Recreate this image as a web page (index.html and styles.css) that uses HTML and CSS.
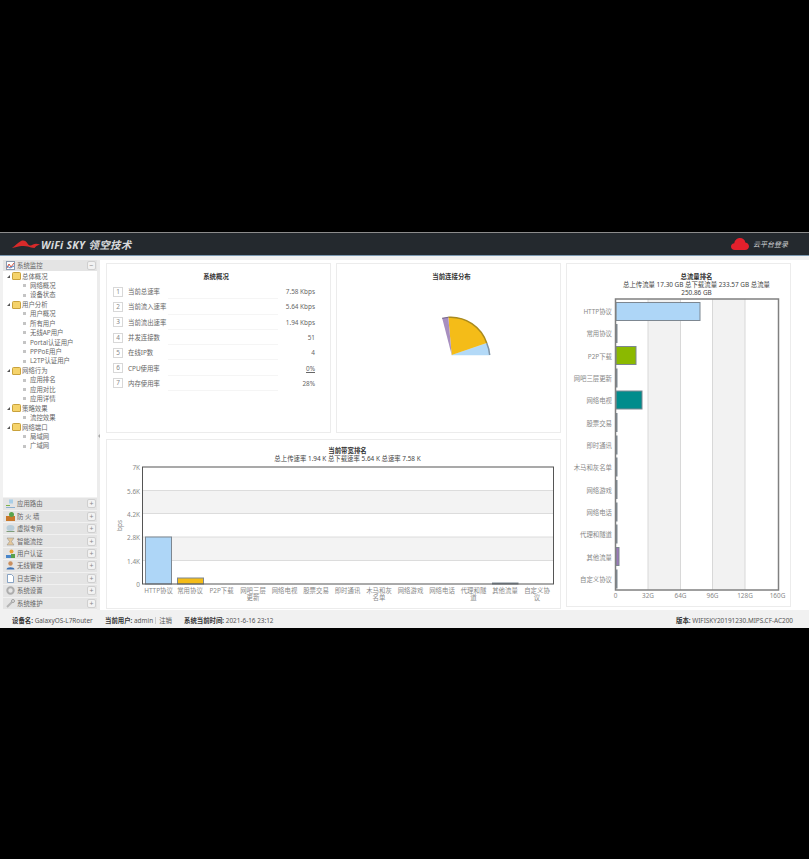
FILE: index.html
```html
<!DOCTYPE html>
<html lang="zh-CN">
<head>
    <meta charset="UTF-8">
    <meta name="viewport" content="width=device-width, initial-scale=1.0">
    <title>WiFiSKY 领空技术</title>
    <link rel="stylesheet" href="styles.css">
</head>
<body>

<div class="app">
    <div class="topbar">
        <div class="logo">
            <svg class="logo-bat" width="28" height="9" viewBox="0 0 28 9"><path d="M0 8 C3 6 6 2.500 9 1 C12 0 14 1 15.500 3.500 C17 6 19 6 21 4.500 C23 3.500 25 3.500 28 4.500 C25 5.500 23.500 6.500 22.500 8 C20 7.500 18 7.500 16 6.500 C13 5.500 8 5.500 0 8Z" fill="#d82a2a"/></svg>
            <span class="logo-text">WiFi SKY 领空技术</span>
        </div>
        <div class="cloud-login">
            <svg width="18" height="12" viewBox="0 0 18 12"><path d="M4 12 C1.500 12 0 10.500 0 8.500 C0 6.500 1.500 5.200 3.300 5.200 C3.800 2.200 6 0 9 0 C11.800 0 13.800 1.800 14.400 4.400 C16.500 4.800 18 6.300 18 8.300 C18 10.500 16.300 12 14 12Z" fill="#e3202c"/></svg>
            <span>云平台登录</span>
        </div>
    </div>

    <div class="main">
        <div class="sidebar">
            <div class="side-head">
                <svg class="side-icon" width="9" height="9" viewBox="0 0 9 9"><rect x="0.500" y="0.500" width="8" height="8" fill="#fff" stroke="#8a9ab0"/><path d="M1 7 L3 3 L5 6 L8 2" fill="none" stroke="#d2553f"/><path d="M1 5 L4 7 L8 5" fill="none" stroke="#4a7fc9"/></svg>
                <span>系统监控</span>
                <span class="toggle">−</span>
            </div>
            <div class="tree">
                <div class="tree-group"><i class="arrow"></i><i class="folder"></i>总体概况</div>
                <div class="tree-item"><i class="leaf"></i>网络概况</div>
                <div class="tree-item"><i class="leaf"></i>设备状态</div>
                <div class="tree-group"><i class="arrow"></i><i class="folder"></i>用户分析</div>
                <div class="tree-item"><i class="leaf"></i>用户概况</div>
                <div class="tree-item"><i class="leaf"></i>所有用户</div>
                <div class="tree-item"><i class="leaf"></i>无线AP用户</div>
                <div class="tree-item"><i class="leaf"></i>Portal认证用户</div>
                <div class="tree-item"><i class="leaf"></i>PPPoE用户</div>
                <div class="tree-item"><i class="leaf"></i>L2TP认证用户</div>
                <div class="tree-group"><i class="arrow"></i><i class="folder"></i>网络行为</div>
                <div class="tree-item"><i class="leaf"></i>应用排名</div>
                <div class="tree-item"><i class="leaf"></i>应用对比</div>
                <div class="tree-item"><i class="leaf"></i>应用详情</div>
                <div class="tree-group"><i class="arrow"></i><i class="folder"></i>策略效果</div>
                <div class="tree-item"><i class="leaf"></i>流控效果</div>
                <div class="tree-group"><i class="arrow"></i><i class="folder"></i>网络端口</div>
                <div class="tree-item"><i class="leaf"></i>局域网</div>
                <div class="tree-item"><i class="leaf"></i>广域网</div>
            </div>
            <div class="accordion">
                <div class="acc-row"><svg class="acc-icon" width="9" height="9" viewBox="0 0 9 9"><path d="M3 0.500h4v4h-4z" fill="#a9cfe8"/><path d="M0 6h4v1h-4z" fill="#7fb24a"/><path d="M0 8h9v1h-9z" fill="#8cb0d0"/></svg><span>应用路由</span><span class="toggle">+</span></div>
                <div class="acc-row"><svg class="acc-icon" width="9" height="9" viewBox="0 0 9 9"><path d="M0 4h9v5h-9z" fill="#c9772b"/><circle cx="5.500" cy="2.500" r="2.500" fill="#58a24c"/></svg><span>防 火 墙</span><span class="toggle">+</span></div>
                <div class="acc-row"><svg class="acc-icon" width="9" height="9" viewBox="0 0 9 9"><ellipse cx="4.500" cy="4" rx="4" ry="3" fill="#b9cdd9"/><path d="M0.500 7h8v1h-8z" fill="#7f9d7a"/></svg><span>虚拟专网</span><span class="toggle">+</span></div>
                <div class="acc-row"><svg class="acc-icon" width="9" height="9" viewBox="0 0 9 9"><path d="M1 1h7L5.500 4.500 8 8H1l2.500-3.500z" fill="#e3c79c" stroke="#8d8d8d" stroke-width="0.500"/></svg><span>智能流控</span><span class="toggle">+</span></div>
                <div class="acc-row"><svg class="acc-icon" width="9" height="9" viewBox="0 0 9 9"><circle cx="5.500" cy="2.500" r="2" fill="#e9a23b"/><path d="M0 6h5v3h-5z" fill="#4a86c9"/><path d="M5 5h4v4h-4z" fill="#5aa04c"/></svg><span>用户认证</span><span class="toggle">+</span></div>
                <div class="acc-row"><svg class="acc-icon" width="9" height="9" viewBox="0 0 9 9"><circle cx="4.500" cy="2.500" r="2.200" fill="#c98f5f"/><path d="M0.500 8.500C0.500 5.500 8.500 5.500 8.500 8.500z" fill="#3d72b5"/></svg><span>无线管理</span><span class="toggle">+</span></div>
                <div class="acc-row"><svg class="acc-icon" width="9" height="9" viewBox="0 0 9 9"><path d="M1.500 0.500h4l2 2v6h-6z" fill="#fff" stroke="#6d8fb8" stroke-width="0.800"/></svg><span>日志审计</span><span class="toggle">+</span></div>
                <div class="acc-row"><svg class="acc-icon" width="9" height="9" viewBox="0 0 9 9"><circle cx="4.500" cy="4.500" r="3.200" fill="none" stroke="#adadad" stroke-width="2"/></svg><span>系统设置</span><span class="toggle">+</span></div>
                <div class="acc-row"><svg class="acc-icon" width="9" height="9" viewBox="0 0 9 9"><path d="M1 8 L6 3" stroke="#b5b5b5" stroke-width="2"/><circle cx="7" cy="2" r="1.500" fill="none" stroke="#a0a0a0"/></svg><span>系统维护</span><span class="toggle">+</span></div>
            </div>
        </div>

        <div class="splitter"><span class="splitter-arrow"></span></div>

        <div class="content">
            <div class="card card-stats">
                <h3 class="card-title">系统概况</h3>
                <div class="stat-list">
                    <div class="stat-row"><span class="stat-num">1</span><span class="stat-name">当前总速率</span><span class="stat-value">7.58 Kbps</span></div>
                    <div class="stat-row"><span class="stat-num">2</span><span class="stat-name">当前流入速率</span><span class="stat-value">5.64 Kbps</span></div>
                    <div class="stat-row"><span class="stat-num">3</span><span class="stat-name">当前流出速率</span><span class="stat-value">1.94 Kbps</span></div>
                    <div class="stat-row"><span class="stat-num">4</span><span class="stat-name">并发连接数</span><span class="stat-value">51</span></div>
                    <div class="stat-row"><span class="stat-num">5</span><span class="stat-name">在线IP数</span><span class="stat-value">4</span></div>
                    <div class="stat-row"><span class="stat-num">6</span><span class="stat-name">CPU使用率</span><span class="stat-value stat-link">0%</span></div>
                    <div class="stat-row"><span class="stat-num">7</span><span class="stat-name">内存使用率</span><span class="stat-value">28%</span></div>
                </div>
            </div>

            <div class="card card-pie">
                <h3 class="card-title">当前连接分布</h3>
                <!-- pie, centre is at 451.7,355 on the page -->
                <svg class="pie" width="223" height="150" viewBox="0 0 223 150">
                    <g transform="translate(114.700 53)">
                        <path d="M0 21 L38 21 A38 38 0 0 0 35 9 Z" fill="#b3d9f7" stroke="#b3d9f7" stroke-width="0.500"/>
                        <path d="M38 21 A38 38 0 0 0 35 9" fill="none" stroke="#7f93a5" stroke-width="1.500"/>
                        <path d="M0 21 L35 9 A38 38 0 0 0 -3.400 -16.700 Z" fill="#f4bc18"/>
                        <path d="M35 9 A38 38 0 0 0 -3.400 -16.700" fill="none" stroke="#a98a1e" stroke-width="1.500"/>
                        <path d="M0 21 L-3.400 -16.700 A38 38 0 0 0 -9.500 -15.700 Z" fill="#a78fc0"/>
                        <path d="M-3.400 -16.700 A38 38 0 0 0 -9.500 -15.700" fill="none" stroke="#7b6a8e" stroke-width="1.200"/>
                    </g>
                </svg>
            </div>

            <div class="card card-tall">
                <h3 class="card-title">总流量排名</h3>
                <p class="card-sub">总上传流量 17.30 GB 总下载流量 233.57 GB 总流量<br>250.86 GB</p>
                <svg class="chart" width="223" height="310" viewBox="567 296 223 310">
                    <rect x="648" y="299" width="32.500" height="291" fill="#f2f2f2"/>
                    <rect x="712" y="299" width="33" height="291" fill="#f2f2f2"/>
                    <g stroke="#d8d8d8" stroke-width="1">
                        <path d="M648 299V590M680.500 299V590M712.500 299V590M745 299V590"/>
                    </g>
                    <g class="bar-h">
                        <rect x="616" y="302.500" width="84" height="18" fill="#aed6f7"/>
                        <rect x="616" y="324.500" width="1" height="18" fill="#f4bc18"/>
                        <rect x="616" y="346.500" width="20" height="18" fill="#8bb900"/>
                        <rect x="616" y="369" width="1" height="18" fill="#666"/>
                        <rect x="616" y="391" width="26" height="18" fill="#008c8c"/>
                        <rect x="616" y="413.500" width="1" height="18" fill="#666"/>
                        <rect x="616" y="436" width="1" height="18" fill="#666"/>
                        <rect x="616" y="458" width="1" height="18" fill="#666"/>
                        <rect x="616" y="480.500" width="1" height="18" fill="#666"/>
                        <rect x="616" y="503" width="1" height="18" fill="#666"/>
                        <rect x="616" y="525" width="1" height="18" fill="#666"/>
                        <rect x="616" y="547.500" width="3" height="18" fill="#9a78b8"/>
                        <rect x="616" y="570" width="1" height="18" fill="#666"/>
                    </g>
                    <rect x="615.500" y="299" width="163" height="291" fill="none" stroke="#808080" stroke-width="1.500"/>
                    <g class="axis-text" text-anchor="end">
                        <text x="612" y="313.500">HTTP协议</text>
                        <text x="612" y="336">常用协议</text>
                        <text x="612" y="358.500">P2P下载</text>
                        <text x="612" y="380.500">网吧三层更新</text>
                        <text x="612" y="403">网络电视</text>
                        <text x="612" y="425.500">股票交易</text>
                        <text x="612" y="447.500">即时通讯</text>
                        <text x="612" y="470">木马和灰名单</text>
                        <text x="612" y="492.500">网络游戏</text>
                        <text x="612" y="515">网络电话</text>
                        <text x="612" y="537">代理和隧道</text>
                        <text x="612" y="559.500">其他流量</text>
                        <text x="612" y="581.500">自定义协议</text>
                    </g>
                    <g class="axis-text" text-anchor="middle">
                        <text x="615.500" y="598">0</text>
                        <text x="648" y="598">32G</text>
                        <text x="680.500" y="598">64G</text>
                        <text x="712.500" y="598">96G</text>
                        <text x="745" y="598">128G</text>
                        <text x="777.500" y="598">160G</text>
                    </g>
                </svg>
            </div>

            <div class="card card-wide">
                <h3 class="card-title">当前带宽排名</h3>
                <p class="card-sub">总上传速率 1.94 K 总下载速率 5.64 K 总速率 7.58 K</p>
                <svg class="chart" width="453" height="146" viewBox="107 462.500 453 146">
                    <rect x="142" y="490" width="411" height="23" fill="#f3f3f3"/>
                    <rect x="142" y="536.500" width="411" height="23.500" fill="#f3f3f3"/>
                    <path d="M142 490H553M142 513H553M142 536.500H553M142 560H553" stroke="#dcdcdc" stroke-width="1"/>
                    <g class="bar-v">
                        <rect x="145.500" y="536.500" width="26" height="47" fill="#aed6f7"/>
                        <rect x="177.500" y="577.500" width="26" height="6" fill="#f4bc18"/>
                        <rect x="492.500" y="582.500" width="25.500" height="1" fill="#9a78b8"/>
                    </g>
                    <rect x="142.500" y="466.500" width="411" height="117" fill="none" stroke="#555" stroke-width="1"/>
                    <g class="axis-text" text-anchor="end">
                        <text x="140" y="469">7K</text>
                        <text x="140" y="493">5.6K</text>
                        <text x="140" y="516">4.2K</text>
                        <text x="140" y="539">2.8K</text>
                        <text x="140" y="563">1.4K</text>
                        <text x="140" y="586">0</text>
                    </g>
                    <text class="axis-text" transform="translate(122 525) rotate(-90)" text-anchor="middle">bps</text>
                    <g class="axis-text" text-anchor="middle">
                        <text x="158.500" y="592">HTTP协议</text>
                        <text x="190" y="592">常用协议</text>
                        <text x="221.500" y="592">P2P下载</text>
                        <text x="253" y="592">网吧三层</text>
                        <text x="253" y="599.500">更新</text>
                        <text x="284.500" y="592">网络电视</text>
                        <text x="316" y="592">股票交易</text>
                        <text x="347.500" y="592">即时通讯</text>
                        <text x="379" y="592">木马和灰</text>
                        <text x="379" y="599.500">名单</text>
                        <text x="410.500" y="592">网络游戏</text>
                        <text x="442" y="592">网络电话</text>
                        <text x="473.500" y="592">代理和隧</text>
                        <text x="473.500" y="599.500">道</text>
                        <text x="505" y="592">其他流量</text>
                        <text x="537" y="592">自定义协</text>
                        <text x="537" y="599.500">议</text>
                    </g>
                </svg>
            </div>
        </div>
    </div>

    <div class="footer">
        <span class="foot-device"><b>设备名:</b> GalaxyOS-L7Router</span>
        <span class="foot-user"><b>当前用户:</b> admin<span class="foot-sep"></span>注销</span>
        <span class="foot-time"><b>系统当前时间:</b> 2021-6-16 23:12</span>
        <span class="foot-version"><b>版本:</b> WIFISKY20191230.MIPS.CF-AC200</span>
    </div>
</div>

</body>
</html>
```

FILE: styles.css
```css
body {
    margin: 0;
    background-color: #000;
    font-family: "Noto Sans", "Noto Sans CJK SC", sans-serif;
    font-size: 6.400px;
    color: #555;
}
.app {
    margin-top: 232px;
    height: 396px;
    display: flex;
    flex-direction: column;
    background-color: #f1f1f1;
}
.topbar {
    height: 22px;
    flex: none;
    display: flex;
    align-items: center;
    justify-content: space-between;
    padding: 0 21px 0 12px;
    background-color: #24292e;
    border-top: 1px solid #8c8c8c;
    border-bottom: 1px solid #7b98b0;
}
.logo {
    display: flex;
    align-items: center;
    gap: 1px;
}
.logo-text {
    font-size: 10.500px;
    font-weight: bold;
    font-style: italic;
    color: #d8dadc;
    letter-spacing: 0.300px;
}
.cloud-login {
    display: flex;
    align-items: center;
    gap: 4px;
    font-size: 7px;
    font-style: italic;
    color: #d5d7d9;
}
.main {
    flex: 1;
    display: flex;
    min-height: 0;
    padding: 4px 0 2px 3px;
}
.sidebar {
    width: 94px;
    flex: none;
    display: flex;
    flex-direction: column;
}
.side-head, .acc-row {
    display: flex;
    align-items: center;
    background-color: #e4e4e4;
    padding: 0 1px 0 3px;
    color: #666;
}
.side-head {
    height: 11px;
    flex: none;
}
.side-icon, .acc-icon {
    margin-right: 2px;
    flex: none;
}
.toggle {
    margin-left: auto;
    width: 7px;
    height: 7px;
    border: 1px solid #cfcfcf;
    border-radius: 2px;
    background-color: #f2f2f2;
    color: #888;
    font-size: 7px;
    line-height: 7px;
    text-align: center;
}
.tree {
    flex: 1;
    background-color: #fff;
    padding-top: 0.500px;
    color: #666;
}
.tree-group, .tree-item {
    height: 9.450px;
    line-height: 9.450px;
    display: flex;
    align-items: center;
    white-space: nowrap;
}
.tree-group {
    padding-left: 4px;
}
.tree-item {
    padding-left: 20px;
}
.arrow {
    width: 0;
    height: 0;
    margin-right: 2px;
    border-left: 3px solid transparent;
    border-bottom: 3px solid #555;
}
.folder {
    width: 7px;
    height: 6px;
    margin-right: 1px;
    background-color: #f5d36b;
    border: 0.500px solid #c9a23c;
    border-radius: 1.500px 1.500px 1px 1px;
}
.leaf {
    width: 3px;
    height: 3px;
    margin-right: 4px;
    background-color: #c4c4c4;
}
.accordion {
    flex: none;
    margin-top: 1px;
}
.acc-row {
    height: 11.450px;
    margin-bottom: 1px;
}
.splitter {
    width: 9px;
    flex: none;
    position: relative;
    background-color: #fff;
    border-left: 3px solid #ececec;
    box-sizing: border-box;
}
.splitter-arrow {
    position: absolute;
    left: -2px;
    top: 174px;
    border-right: 2px solid #aaa;
    border-top: 2px solid transparent;
    border-bottom: 2px solid transparent;
}
.content {
    flex: 1;
    display: grid;
    grid-template-columns: 225px 225px 225px;
    grid-template-rows: 170px 170px;
    column-gap: 5px;
    row-gap: 6px;
    align-content: start;
    padding-top: 3px;
    background-color: #fff;
}
.card {
    background-color: #fff;
    border: 1px solid #ececec;
    box-sizing: border-box;
    overflow: hidden;
    text-align: center;
}
.card-stats .card-title {
    padding-right: 5px;
}
.card-pie .card-title {
    padding-left: 6px;
}
.card-tall {
    grid-column: 3;
    grid-row: 1 / 3;
    height: 344px;
}
.card-tall .card-title, .card-tall .card-sub {
    padding-left: 36px;
}
.card-wide {
    grid-column: 1 / 3;
    grid-row: 2;
}
.card-wide .card-title, .card-wide .card-sub {
    padding-left: 28px;
}
.card-title {
    margin: 8px 0 0;
    font-size: 6.400px;
    line-height: 9px;
    font-weight: bold;
    color: #333;
}
.card-wide .card-title {
    margin-top: 6px;
}
.card-sub {
    margin: 0;
    font-size: 6.400px;
    line-height: 7.500px;
    color: #444;
}
.stat-list {
    margin-top: 3px;
    padding: 0 15px 0 6px;
}
.stat-row {
    height: 15.300px;
    display: flex;
    align-items: center;
    text-align: left;
    color: #666;
    background: linear-gradient(#f5f5f5, #f5f5f5) no-repeat 55px 100% / 110px 1px;
}
.stat-num {
    width: 8px;
    height: 8px;
    margin-right: 5px;
    border: 1px solid #d8d8d8;
    line-height: 8px;
    text-align: center;
    color: #888;
}
.stat-value {
    margin-left: auto;
}
.stat-link {
    text-decoration: underline;
}
.pie, .chart {
    display: block;
}
.bar-h rect, .bar-v rect {
    stroke: #7d8791;
    stroke-width: 1;
}
.axis-text {
    font-size: 6.400px;
    fill: #888;
}
.footer {
    height: 16px;
    flex: none;
    display: flex;
    align-items: center;
    padding: 0 16px 0 12px;
    background-color: #f1f1f1;
    color: #555;
    white-space: nowrap;
}
.footer b {
    color: #333;
}
.foot-device {
    width: 93px;
}
.foot-user {
    width: 79px;
}
.foot-sep {
    display: inline-block;
    width: 1px;
    height: 7px;
    margin: 0 3px 0 2px;
    background-color: #ccc;
    vertical-align: middle;
}
.foot-version {
    margin-left: auto;
}
```
